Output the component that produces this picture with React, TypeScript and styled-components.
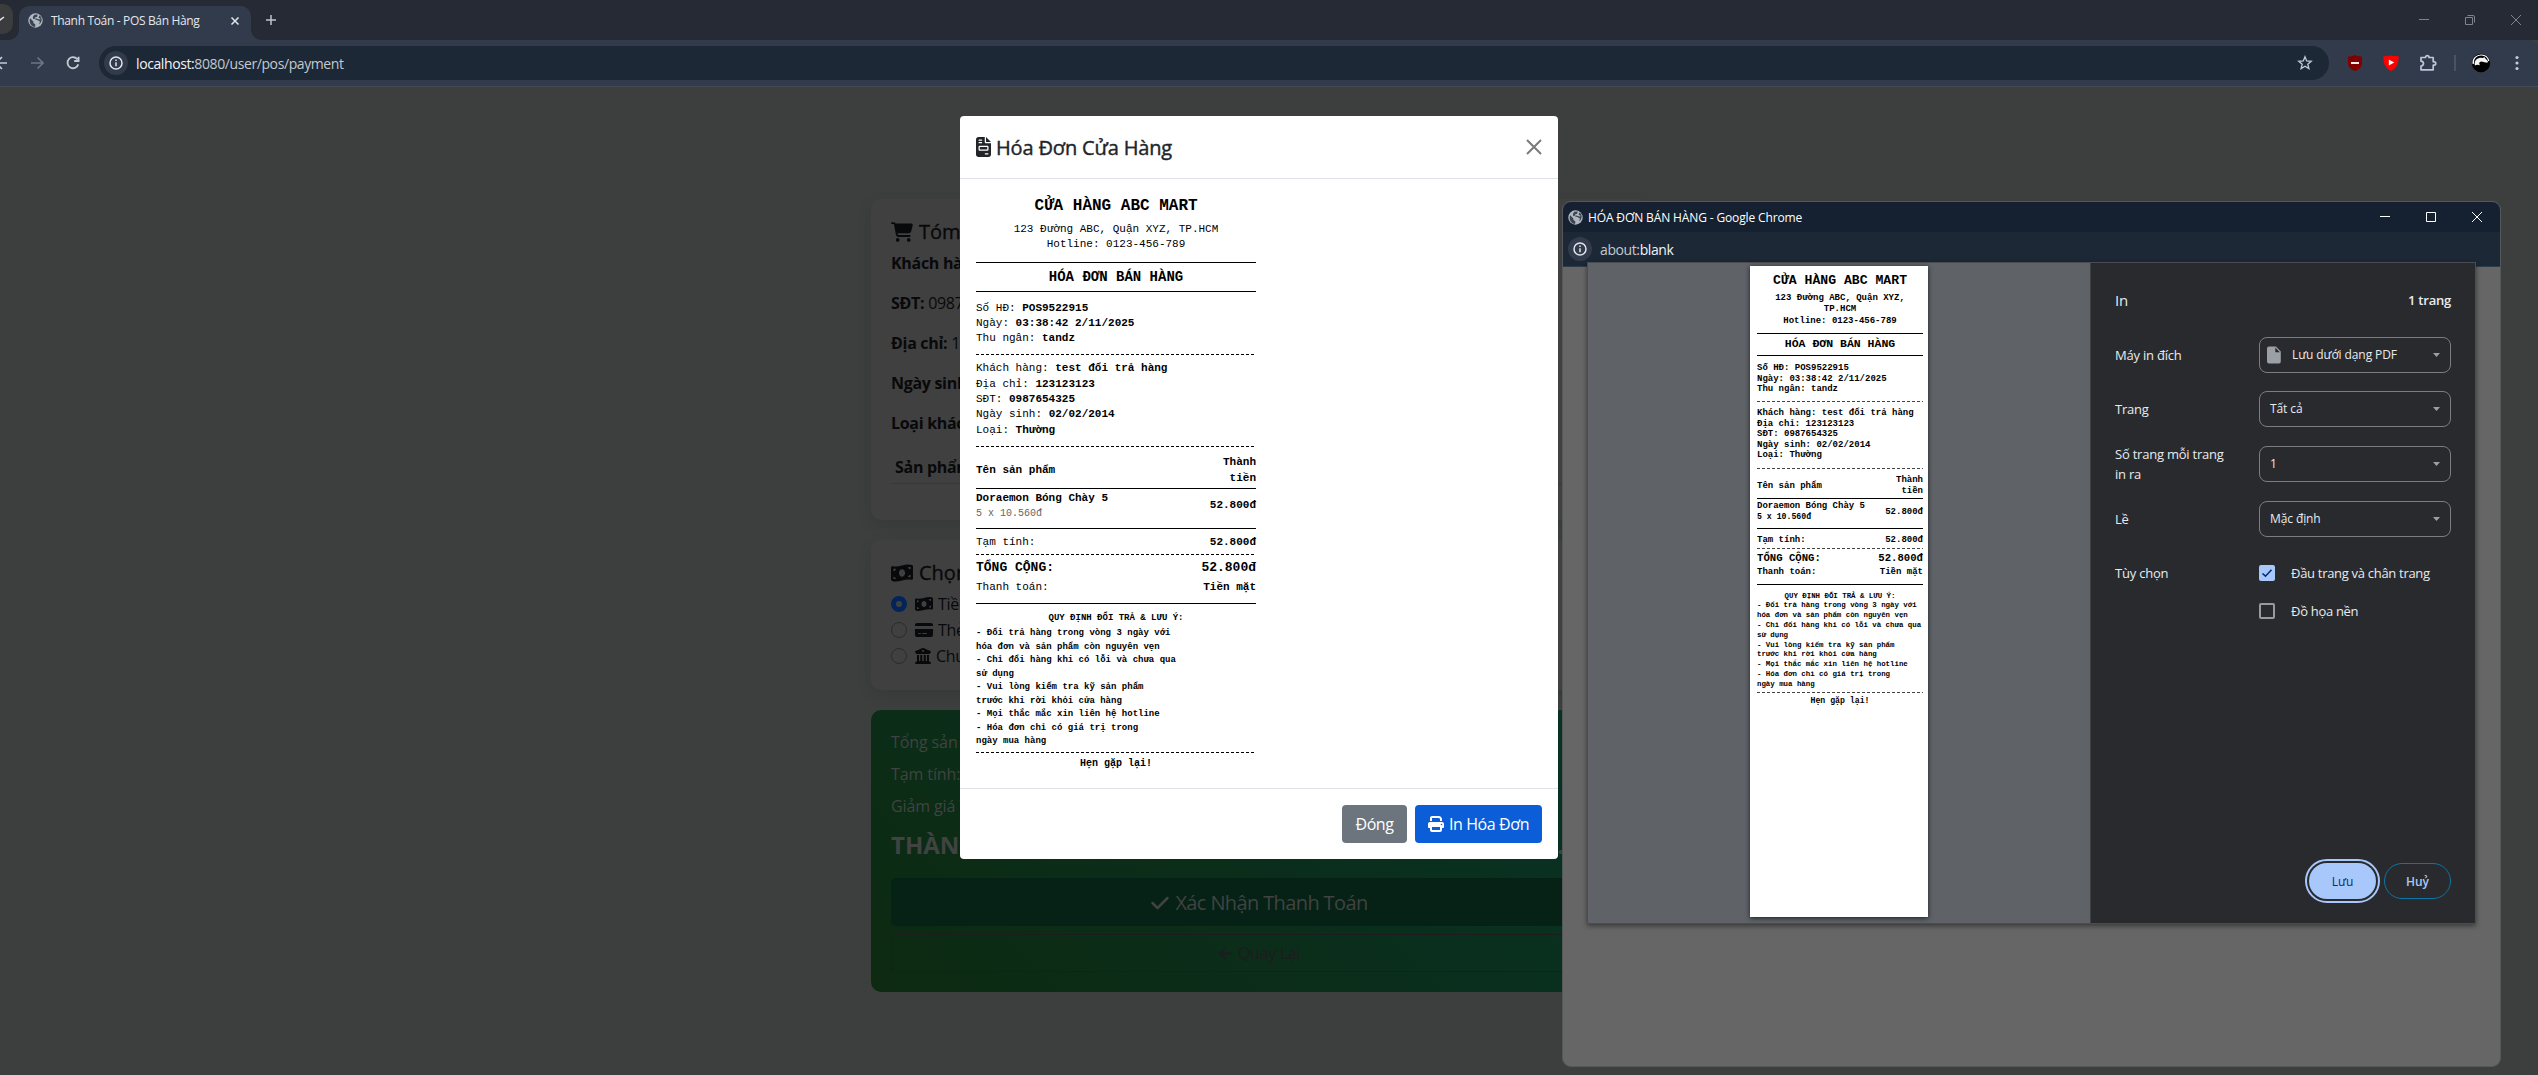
import React from "react";
import styled, { createGlobalStyle, css } from "styled-components";
import {
  FaFileInvoice,
  FaCartShopping,
  FaMoneyBillWave,
  FaCreditCard,
  FaBuildingColumns,
  FaPrint,
  FaCheck,
  FaArrowLeft,
} from "react-icons/fa6";

const ui = `"Open Sans", "Noto Sans", sans-serif`;
const mono = `"Liberation Mono", monospace`;

const Global = createGlobalStyle`
  * { box-sizing: border-box; }
  body { margin: 0; background: #3d3f3e; font-family: ${ui}; overflow: hidden; }
  svg { display: block; flex: none; }
`;

const Desktop = styled.div`
  position: relative;
  width: 2538px;
  height: 1075px;
  overflow: hidden;
  background: #3d3f3e;
`;

/* ---------- browser chrome ---------- */

const TabStrip = styled.div`
  height: 40px;
  display: flex;
  align-items: flex-end;
  background: #252a35;
`;
const TabSearch = styled.div`
  width: 13px;
  height: 30px;
  margin-bottom: 6px;
  border-radius: 0 10px 10px 0;
  background: #3b3c3d;
  display: flex;
  align-items: center;
`;
const Tab = styled.div`
  position: relative;
  width: 232px;
  height: 34px;
  margin-left: 6px;
  padding: 0 11px 5px 9px;
  border-radius: 10px 10px 0 0;
  background: #323b4b;
  display: flex;
  align-items: center;
  &::before, &::after {
    content: "";
    position: absolute;
    bottom: 0;
    width: 10px;
    height: 10px;
  }
  &::before { left: -10px; background: radial-gradient(circle at 0 0, transparent 9.5px, #323b4b 10px); }
  &::after { right: -10px; background: radial-gradient(circle at 100% 0, transparent 9.5px, #323b4b 10px); }
`;
const TabTitle = styled.span`
  margin-left: 8px;
  flex: 1;
  font-size: 12px;
  letter-spacing: -0.34px;
  white-space: nowrap;
  color: #e3e6ea;
`;
const NewTab = styled.div`
  margin: 0 0 15px 15px;
  flex: 1;
`;
const WindowControls = styled.div<{ $gap: number }>`
  display: flex;
  align-items: center;
  gap: ${(p) => p.$gap}px;
`;
const MainControls = styled(WindowControls)`
  height: 40px;
  padding-right: 17px;
`;
const Toolbar = styled.div`
  height: 47px;
  background: #323b4b;
  border-bottom: 1px solid #454b54;
  border-top-right-radius: 8px;
  display: flex;
  align-items: center;
`;
const NavButtons = styled.div`
  width: 99px;
  display: flex;
  align-items: center;
  gap: 21px;
  margin-left: -9px;
  padding-right: 7px;
`;
const Omnibox = styled.div`
  width: 2230px;
  height: 34px;
  margin-left: 9px;
  padding: 0 16px 0 5px;
  border-radius: 17px;
  background: #1c2836;
  display: flex;
  align-items: center;
`;
const InfoBadge = styled.div`
  width: 24px;
  height: 24px;
  border-radius: 50%;
  background: #323b4b;
  display: flex;
  align-items: center;
  justify-content: center;
`;
const Url = styled.span<{ $ml: number }>`
  flex: 1;
  margin-left: ${(p) => p.$ml}px;
  font-size: 14px;
  letter-spacing: -0.4px;
  color: #f1f3f5;
  span { color: #c3c8cf; }
`;
const Extensions = styled.div`
  display: flex;
  align-items: center;
  margin-left: 18px;
`;
const Sep = styled.div`
  width: 2px;
  height: 16px;
  margin: 0 15px 0 17px;
  background: #4a5361;
`;

/* ---------- dimmed page ---------- */

const PageColumn = styled.main`
  width: 776px;
  margin: 112px 0 0 871px;
  display: flex;
  flex-direction: column;
  gap: 20px;
`;
const Card = styled.section<{ $h: number }>`
  height: ${(p) => p.$h}px;
  padding: 20px;
  border-radius: 10px;
  background: #404040;
  color: #08090a;
  box-shadow: 0 5px 15px rgba(0, 0, 0, 0.1);
  overflow: hidden;
`;
const CardTitle = styled.h5`
  margin: 0 0 6px;
  display: flex;
  align-items: center;
  gap: 6px;
  font-size: 20px;
  line-height: 26px;
  font-weight: 500;
  -webkit-text-stroke: 0.35px currentColor;
`;
const Info = styled.p`
  margin: 0 0 16px;
  font-size: 16px;
  line-height: 24px;
  letter-spacing: -0.3px;
`;
const TableHead = styled.div`
  padding: 4px;
  border-bottom: 1px solid #36383a;
  font-size: 16px;
  line-height: 24px;
  letter-spacing: -0.3px;
  font-weight: 700;
`;
const PayOption = styled.div`
  height: 24px;
  margin-top: 2px;
  display: flex;
  align-items: center;
  font-size: 16px;
  letter-spacing: -0.3px;
  svg { margin: 0 5px 0 8px; }
`;
const Radio = styled.span<{ $on?: boolean }>`
  width: 16px;
  height: 16px;
  border-radius: 50%;
  border: 1px solid #2b2b2b;
  ${(p) => p.$on && css`border: 5px solid #03245a;`}
`;
const Total = styled.section`
  height: 282px;
  padding: 20px;
  border-radius: 10px;
  color: #404342;
  background: linear-gradient(45deg, #0d2a11, #083226);
`;
const TotalRow = styled.div`
  display: flex;
  justify-content: space-between;
  margin-bottom: 8px;
  font-size: 16px;
  line-height: 24px;
  letter-spacing: -0.1px;
`;
const GrandRow = styled(TotalRow)`
  margin: 0 0 17px;
  padding-top: 3px;
  font-size: 24px;
  line-height: 32px;
  font-weight: 700;
  letter-spacing: 0;
`;
const Confirm = styled.div`
  height: 48px;
  padding-top: 1px;
  border-radius: 5px;
  background: #062115;
  display: flex;
  align-items: center;
  justify-content: center;
  gap: 5px;
  font-size: 20px;
  letter-spacing: -0.62px;
`;
const Back = styled.div`
  height: 38px;
  margin-top: 8px;
  border: 1px solid #1b1d1f;
  border-radius: 4px;
  display: flex;
  align-items: center;
  justify-content: center;
  gap: 5px;
  color: #1b1d1f;
  font-size: 16px;
  letter-spacing: -0.3px;
`;

/* ---------- receipt dialog ---------- */

const Modal = styled.div`
  position: absolute;
  left: 960px;
  top: 116px;
  width: 598px;
  height: 743px;
  border-radius: 4px;
  background: #fff;
  color: #212529;
  display: flex;
  flex-direction: column;
`;
const ModalHeader = styled.header`
  height: 63px;
  padding: 0 16px;
  border-bottom: 1px solid #dee2e6;
  display: flex;
  align-items: center;
`;
const ModalTitle = styled.h5`
  margin: 0;
  flex: 1;
  display: flex;
  align-items: center;
  gap: 5px;
  font-size: 20px;
  font-weight: 500;
  letter-spacing: -0.15px;
  -webkit-text-stroke: 0.4px currentColor;
`;
const ModalBody = styled.div`
  flex: 1;
  padding: 16px;
`;
const ModalFooter = styled.footer`
  height: 71px;
  padding: 0 16px;
  border-top: 1px solid #dee2e6;
  display: flex;
  align-items: center;
  justify-content: flex-end;
  gap: 8px;
`;
const Button = styled.div<{ $bg: string; $w: number }>`
  width: ${(p) => p.$w}px;
  height: 38px;
  border-radius: 4px;
  background: ${(p) => p.$bg};
  color: #fff;
  display: flex;
  align-items: center;
  justify-content: center;
  gap: 5px;
  font-size: 16px;
  letter-spacing: -0.4px;
`;

/* ---------- receipt ---------- */

type Metrics = {
  weight: number;
  width: number;
  muted: string;
  body: [number, number];
  small: [number, number];
  title: [number, number];
  head: [number, number];
  total: [number, number];
  note: [number, number];
  bye: [number, number];
  address: string[];
  gaps: number[];
  dash: string;
};

const Paper = styled.div<{ $w: number; $weight: number }>`
  width: ${(p) => p.$w}px;
  display: flex;
  flex-direction: column;
  font-family: ${mono};
  font-weight: ${(p) => p.$weight};
  color: #000;
  white-space: pre;
`;
const Line = styled.div<{ $f: [number, number]; $mt?: number; $center?: boolean; $bold?: boolean; $color?: string }>`
  font-size: ${(p) => p.$f[0]}px;
  line-height: ${(p) => p.$f[1] + 1.4}px;
  height: ${(p) => p.$f[1]}px;
  margin-top: ${(p) => p.$mt ?? 0}px;
  ${(p) => p.$center && "text-align: center;"}
  ${(p) => p.$bold && "font-weight: 700;"}
  ${(p) => p.$color && `color: ${p.$color};`}
`;
const Pair = styled(Line)`
  display: flex;
  justify-content: space-between;
`;
const Cells = styled.div<{ $mt: number }>`
  margin-top: ${(p) => p.$mt}px;
  display: flex;
  justify-content: space-between;
  align-items: center;
  text-align: right;
  & > :first-child { text-align: left; }
`;
const Rule = styled.div<{ $mt: number }>`
  height: 1px;
  margin-top: ${(p) => p.$mt}px;
  background: #000;
`;
const Dash = styled.div<{ $mt: number; $c: string }>`
  height: 1px;
  margin-top: ${(p) => p.$mt}px;
  background: repeating-linear-gradient(90deg, ${(p) => p.$c} 0 3px, transparent 3px 5px);
`;

const bill: Metrics = {
  weight: 400, width: 280, muted: "#666",
  body: [11, 15.4], small: [10, 14], title: [16, 22.4], head: [14, 19.6],
  total: [13, 18.2], note: [9, 13.5], bye: [10, 14],
  address: ["123 Đường ABC, Quận XYZ, TP.HCM"],
  gaps: [0, 3.6, 0, 10.2, 4, 4.4, 7.6, 8.2, 5.4, 8.6, 7.5, 2.7, 1.4, 8.6, 5, 4.6, 3.1, 2.7, 8.6, 7, 1.5, 4.6, 3.1],
  dash: "#000",
};
const sheet: Metrics = {
  weight: 700, width: 166, muted: "#000",
  body: [9, 10.6], small: [8.2, 10.6], title: [13.15, 15], head: [11.5, 13],
  total: [10.65, 13], note: [7.4, 9.8], bye: [8.2, 10],
  address: ["123 Đường ABC, Quận XYZ,", "TP.HCM"],
  gaps: [0, 4.3, 1.3, 7.5, 3.5, 4.5, 6.3, 6.9, 5.3, 7.7, 5.8, 2, 1.9, 5.9, 5.3, 3.1, 2.7, 1.6, 7.1, 6, 0, 3.2, 2.8],
  dash: "#444",
};

const rules = [
  "- Đổi trả hàng trong vòng 3 ngày với",
  "hóa đơn và sản phẩm còn nguyên vẹn",
  "- Chỉ đổi hàng khi có lỗi và chưa qua",
  "sử dụng",
  "- Vui lòng kiểm tra kỹ sản phẩm",
  "trước khi rời khỏi cửa hàng",
  "- Mọi thắc mắc xin liên hệ hotline",
  "- Hóa đơn chỉ có giá trị trong",
  "ngày mua hàng",
];
const orderInfo = [["Số HĐ: ", "POS9522915"], ["Ngày: ", "03:38:42 2/11/2025"], ["Thu ngân: ", "tandz"]];
const customer = [
  ["Khách hàng: ", "test đổi trả hàng"],
  ["Địa chỉ: ", "123123123"],
  ["SĐT: ", "0987654325"],
  ["Ngày sinh: ", "02/02/2014"],
  ["Loại: ", "Thường"],
];

function Receipt({ m }: { m: Metrics }) {
  const g = m.gaps;
  return (
    <Paper $w={m.width} $weight={m.weight}>
      <Line $f={m.title} $center $bold>CỬA HÀNG ABC MART</Line>
      {m.address.map((a, i) => <Line key={a} $f={m.body} $center $mt={i ? -0.2 : g[1]}>{a}</Line>)}
      <Line $f={m.body} $center $mt={g[2]}>Hotline: 0123-456-789</Line>
      <Rule $mt={g[3]} />
      <Line $f={m.head} $center $bold $mt={g[4]}>HÓA ĐƠN BÁN HÀNG</Line>
      <Rule $mt={g[5]} />
      {orderInfo.map(([k, v], i) => (
        <Line key={k} $f={m.body} $mt={i ? 0 : g[6]}>{k}<b>{v}</b></Line>
      ))}
      <Dash $c={m.dash} $mt={g[7]} />
      {customer.map(([k, v], i) => (
        <Line key={k} $f={m.body} $mt={i ? 0 : g[8]}>{k}<b>{v}</b></Line>
      ))}
      <Dash $c={m.dash} $mt={g[9]} />
      <Cells $mt={g[10]}>
        <Line $f={m.body} $bold>Tên sản phẩm</Line>
        <div>
          <Line $f={m.body} $bold>Thành</Line>
          <Line $f={m.body} $bold>tiền</Line>
        </div>
      </Cells>
      <Rule $mt={g[11]} />
      <Cells $mt={g[12]}>
        <div>
          <Line $f={m.body} $bold>Doraemon Bóng Chày 5</Line>
          <Line $f={m.small} $color={m.muted}>5 x 10.560đ</Line>
        </div>
        <Line $f={m.body} $bold>52.800đ</Line>
      </Cells>
      <Rule $mt={g[13]} />
      <Pair $f={m.body} $mt={g[14]}><span>Tạm tính:</span><b>52.800đ</b></Pair>
      <Dash $c={m.dash} $mt={g[15]} />
      <Pair $f={m.total} $mt={g[16]} $bold><span>TỔNG CỘNG:</span><span>52.800đ</span></Pair>
      <Pair $f={m.body} $mt={g[17]}><span>Thanh toán:</span><b>Tiền mặt</b></Pair>
      <Rule $mt={g[18]} />
      <Line $f={m.note} $center $bold $mt={g[19]}>QUY ĐỊNH ĐỔI TRẢ &amp; LƯU Ý:</Line>
      {rules.map((r, i) => <Line key={r} $f={m.note} $bold $mt={i ? 0 : g[20]}>{r}</Line>)}
      <Dash $c={m.dash} $mt={g[21]} />
      <Line $f={m.bye} $center $bold $mt={g[22]}>Hẹn gặp lại!</Line>
    </Paper>
  );
}

/* ---------- print popup ---------- */

const Popup = styled.div`
  position: absolute;
  left: 1562px;
  top: 201px;
  width: 939px;
  height: 866px;
  border: 1px solid #55585a;
  border-radius: 9px;
  background: #666;
  overflow: hidden;
`;
const PopupTitle = styled.div`
  height: 30px;
  padding: 0 18px 0 5px;
  background: #152030;
  color: #fff;
  display: flex;
  align-items: center;
  font-size: 12px;
  letter-spacing: -0.13px;
  span { flex: 1; margin-left: 5px; }
`;
const PopupAddress = styled.div`
  height: 35px;
  padding: 0 5px;
  background: #1c2836;
  border-bottom: 1px solid #2d3b4c;
  display: flex;
  align-items: center;
`;
const PrintDialog = styled.div`
  position: absolute;
  left: 24px;
  top: 60px;
  width: 889px;
  height: 662px;
  border: 1px solid #494c50;
  box-shadow: 0 2px 5px rgba(0, 0, 0, 0.45);
  display: flex;
`;
const Preview = styled.div`
  width: 502px;
  padding: 3px 0 0 162px;
  background: #5f6368;
`;
const SheetPage = styled.div`
  width: 178px;
  height: 651px;
  padding: 7px 5px 0 7px;
  background: #fff;
  box-shadow: 0 1px 5px rgba(0, 0, 0, 0.7);
`;
const Settings = styled.div`
  flex: 1;
  padding: 0 24px;
  border-left: 1px solid #3f4144;
  background: #292a2d;
  color: #e8eaed;
  font-size: 13px;
  letter-spacing: -0.22px;
  display: flex;
  flex-direction: column;
`;
const SettingsHead = styled.div`
  height: 74px;
  padding-bottom: 1px;
  display: flex;
  justify-content: space-between;
  align-items: center;
  font-size: 15px;
  b { font-size: 13px; font-weight: 600; }
`;
const Setting = styled.div<{ $h: number }>`
  height: ${(p) => p.$h}px;
  display: flex;
  align-items: center;
  justify-content: space-between;
  line-height: 20px;
`;
const Label = styled.span`
  width: 120px;
`;
const Select = styled.div<{ $icon?: boolean }>`
  width: 192px;
  height: 36px;
  padding: 0 10px 0 ${(p) => (p.$icon ? 7 : 10)}px;
  border: 1px solid #7b7d80;
  border-radius: 8px;
  display: flex;
  align-items: center;
  font-size: 12px;
  letter-spacing: -0.1px;
  span { flex: 1; margin-left: ${(p) => (p.$icon ? 11 : 0)}px; }
`;
const Option = styled.div`
  width: 192px;
  display: flex;
  align-items: center;
  gap: 16px;
  white-space: nowrap;
  letter-spacing: -0.3px;
`;
const Box = styled.span<{ $on?: boolean }>`
  width: 16px;
  height: 16px;
  border-radius: 2px;
  border: ${(p) => (p.$on ? "0" : "2px solid #9a9a9a")};
  background: ${(p) => (p.$on ? "#a8c7fa" : "transparent")};
`;
const Actions = styled.div`
  margin-top: auto;
  margin-bottom: 24px;
  display: flex;
  justify-content: flex-end;
  gap: 8px;
`;
const Pill = styled.div<{ $primary?: boolean }>`
  width: 67px;
  height: 36px;
  border-radius: 18px;
  display: flex;
  align-items: center;
  justify-content: center;
  font-size: 12px;
  font-weight: 600;
  letter-spacing: 0;
  ${(p) =>
    p.$primary
      ? css`
          background: #a8c7fa;
          color: #062e6f;
          font-weight: 500;
          outline: 2px solid #a8c7fa;
          outline-offset: 2px;
        `
      : css`
          border: 1px solid #0a76a5;
          color: #a8c7fa;
        `}
`;

/* ---------- drawings ---------- */

const Globe = () => (
  <svg width="15" height="15" viewBox="0 0 15 15">
    <circle cx="7.5" cy="7.5" r="7.2" fill="#b1b7be" />
    <path d="M2.2 5.2 L5.4 8.4 L5.4 10 L7.4 11.4 L7 14 C3.6 13.6 1 10.4 1.8 6.2 Z M6.4 1.8 L9.6 1.6 L9.2 3.8 L7 4.6 L6.8 6.2 L9.8 7.2 L12 8.4 L11 11.6 C14.6 9 14.4 4.4 11.4 2.6 L10.6 4.8 L13 6 L11.4 6.4 L8.4 5.4 L5.2 6 L4.8 4 Z" fill="#3a4454" />
  </svg>
);
const InfoIcon = () => (
  <svg width="14" height="14" viewBox="0 0 14 14" fill="none" stroke="#e0e4ea" strokeWidth="1.5">
    <circle cx="7" cy="7" r="6" />
    <path d="M7 6.2V10.2M7 3.6V5.1" />
  </svg>
);
const Stroke = ({ d, c = "#c3cad5", w = 1.6, s = 14 }: { d: string; c?: string; w?: number; s?: number }) => (
  <svg width={s} height={s} viewBox={`0 0 ${s} ${s}`} fill="none" stroke={c} strokeWidth={w}>
    <path d={d} />
  </svg>
);
const Caret = () => (
  <svg width="7" height="4" viewBox="0 0 7 4"><path d="M0 0H7L3.5 4Z" fill="#9aa0a6" /></svg>
);
const CheckMark = () => (
  <svg width="16" height="16" viewBox="0 0 16 16" fill="none" stroke="#062e6f" strokeWidth="1.6">
    <path d="M3.5 8.5L6.5 11.2L12.5 4.8" />
  </svg>
);
const ToolIcon = styled.svg<{ $ml: number }>`
  margin-left: ${(p) => p.$ml}px;
`;

export default function App() {
  return (
    <Desktop>
      <Global />
      <TabStrip>
        <TabSearch><Stroke s={6} c="#e3e6ea" w={1.5} d="M-2 1L0 4L4 1" /></TabSearch>
        <Tab>
          <Globe />
          <TabTitle>Thanh Toán - POS Bán Hàng</TabTitle>
          <Stroke s={10} c="#dfe3e8" w={1.6} d="M1.5 1.5L8.5 8.5M8.5 1.5L1.5 8.5" />
        </Tab>
        <NewTab><Stroke s={10} c="#bfc5cd" w={1.5} d="M5 0V10M0 5H10" /></NewTab>
        <MainControls $gap={36}>
          <Stroke s={10} c="#7f848c" w={1} d="M0 4.5H10" />
          <Stroke s={10} c="#7f848c" w={1} d="M0.5 2.5H7.5V9.5H0.5ZM2.5 0.5H8Q9.5 0.5 9.5 2V7.5" />
          <Stroke s={10} c="#7f848c" w={1} d="M0 0L10 10M10 0L0 10" />
        </MainControls>
      </TabStrip>
      <Toolbar>
        <NavButtons>
          <Stroke s={16} d="M5 8H16M11 2L5 8L11 14" />
          <Stroke s={16} c="#6c7583" d="M3 8H14.5M9.5 2.5L15 8L9.5 13.5" />
          <Stroke s={16} w={1.8} d="M12.6 4.6A5.5 5.5 0 1 0 13.3 9.4M13.6 1.8V6H9.2" />
        </NavButtons>
        <Omnibox>
          <InfoBadge><InfoIcon /></InfoBadge>
          <Url $ml={8}>localhost:<span>8080/user/pos/payment</span></Url>
          <Stroke s={16} w={1.3} d="M8 1.8L9.7 6L14.2 6.3L10.8 9.2L11.9 13.6L8 11.2L4.1 13.6L5.2 9.2L1.8 6.3L6.3 6Z" />
        </Omnibox>
        <Extensions>
          <svg width="16" height="16" viewBox="0 0 16 16">
            <path d="M8 0C6 1.2 3.5 1.6 1 1.6V8C1 12 4 14.6 8 16C12 14.6 15 12 15 8V1.6C12.5 1.6 10 1.2 8 0Z" fill="#800000" />
            <rect x="4" y="7" width="8" height="2" fill="#eee" />
          </svg>
          <ToolIcon $ml={20} width="16" height="16" viewBox="0 0 16 16">
            <path d="M8 0.5C5.5 1 3 1.2 0.3 1.2C0.3 8 2 13 8 16C14 13 15.7 8 15.7 1.2C13 1.2 10.5 1 8 0.5Z" fill="#ff0000" />
            <path d="M5.8 4.4L11.2 7.4L5.8 10.4Z" fill="#fff" />
          </ToolIcon>
          <ToolIcon $ml={20} width="18" height="18" viewBox="0 0 18 18" fill="none" stroke="#b9c7dc" strokeWidth="1.7">
            <path d="M2 3.5H6.5C6.5 0.9 10 0.9 10 3.5H14.2V7.7C17.6 7.7 17.6 11.2 14.2 11.2V15.8H2V12C5.3 11.6 5.3 7.6 2 7.2Z" strokeLinejoin="round" />
          </ToolIcon>
          <Sep />
          <svg width="20" height="20" viewBox="0 0 20 20">
            <circle cx="10" cy="10" r="9.2" fill="#000" />
            <path d="M2.2 11C1.4 5.6 5.6 1.8 10.5 2C14.2 2.2 17 4.6 17.8 8" fill="none" stroke="#fff" strokeWidth="1.2" />
            <path d="M4 12.6C2.8 9 5 5.6 9 4.8L12.4 5L13 3.8L14.4 5.6L17 8.2L16.4 9.8L13.4 9.2L10.4 8.6C8 8.8 7.6 10.8 9 12.2C6.8 11.6 5.4 11.4 4 12.6Z" fill="#f4f4f4" />
          </svg>
          <ToolIcon $ml={24} width="4" height="16" viewBox="0 0 4 16" fill="#c3cad5">
            <circle cx="2" cy="2.5" r="1.6" /><circle cx="2" cy="8" r="1.6" /><circle cx="2" cy="13.5" r="1.6" />
          </ToolIcon>
        </Extensions>
      </Toolbar>

      <PageColumn>
        <Card $h={321}>
          <CardTitle><FaCartShopping size={22} />Tóm</CardTitle>
          <Info><b>Khách hà</b></Info>
          <Info><b>SĐT:</b> 0987</Info>
          <Info><b>Địa chỉ:</b> 1</Info>
          <Info><b>Ngày sinh</b></Info>
          <Info><b>Loại khác</b></Info>
          <TableHead>Sản phẩm</TableHead>
        </Card>
        <Card $h={150}>
          <CardTitle><FaMoneyBillWave size={22} />Chọn</CardTitle>
          <PayOption><Radio $on /><FaMoneyBillWave size={18} />Tiền</PayOption>
          <PayOption><Radio /><FaCreditCard size={18} />Thẻ</PayOption>
          <PayOption><Radio /><FaBuildingColumns size={16} />Chu</PayOption>
        </Card>
        <Total>
          <TotalRow><span>Tổng sản</span></TotalRow>
          <TotalRow><span>Tạm tính:</span></TotalRow>
          <TotalRow><span>Giảm giá V</span></TotalRow>
          <GrandRow><span>THÀNH</span><span>52.800 ₫</span></GrandRow>
          <Confirm><FaCheck size={20} />Xác Nhận Thanh Toán</Confirm>
          <Back><FaArrowLeft size={15} />Quay Lại</Back>
        </Total>
      </PageColumn>

      <Modal>
        <ModalHeader>
          <ModalTitle><FaFileInvoice size={20} style={{ width: 15 }} />Hóa Đơn Cửa Hàng</ModalTitle>
          <Stroke s={16} c="#7a7a7a" w={2} d="M1 1L15 15M15 1L1 15" />
        </ModalHeader>
        <ModalBody><Receipt m={bill} /></ModalBody>
        <ModalFooter>
          <Button $bg="#6c757d" $w={65}>Đóng</Button>
          <Button $bg="#0b5ed7" $w={127}><FaPrint size={16} />In Hóa Đơn</Button>
        </ModalFooter>
      </Modal>

      <Popup>
        <PopupTitle>
          <Globe />
          <span>HÓA ĐƠN BÁN HÀNG - Google Chrome</span>
          <WindowControls $gap={36}>
            <Stroke s={10} c="#fff" w={1} d="M0 4.5H10" />
            <Stroke s={10} c="#fff" w={1} d="M0.5 0.5H9.5V9.5H0.5Z" />
            <Stroke s={10} c="#fff" w={1} d="M0 0L10 10M10 0L0 10" />
          </WindowControls>
        </PopupTitle>
        <PopupAddress>
          <InfoBadge><InfoIcon /></InfoBadge>
          <Url $ml={8}><span>about:</span>blank</Url>
        </PopupAddress>
        <PrintDialog>
          <Preview><SheetPage><Receipt m={sheet} /></SheetPage></Preview>
          <Settings>
            <SettingsHead><span>In</span><b>1 trang</b></SettingsHead>
            <Setting $h={36}>
              <Label>Máy in đích</Label>
              <Select $icon>
                <svg width="14" height="18" viewBox="0 0 14 18"><path d="M2 0.5H9L13.8 5.5V15.5Q13.8 17.5 12 17.5H2Q0 17.5 0 15.5V2.5Q0 0.5 2 0.5ZM8.3 1.5V6.2H12.8Z" fill="#9aa0a6" fillRule="evenodd" /></svg>
                <span>Lưu dưới dạng PDF</span><Caret />
              </Select>
            </Setting>
            <Setting $h={72}><Label>Trang</Label><Select><span>Tất cả</span><Caret /></Select></Setting>
            <Setting $h={38}><Label>Số trang mỗi trang in ra</Label><Select><span>1</span><Caret /></Select></Setting>
            <Setting $h={72}><Label>Lề</Label><Select><span>Mặc định</span><Caret /></Select></Setting>
            <Setting $h={36}><Label>Tùy chọn</Label><Option><Box $on><CheckMark /></Box>Đầu trang và chân trang</Option></Setting>
            <Setting $h={40}><Label /><Option><Box />Đồ họa nền</Option></Setting>
            <Actions><Pill $primary>Lưu</Pill><Pill>Huỷ</Pill></Actions>
          </Settings>
        </PrintDialog>
      </Popup>
    </Desktop>
  );
}
